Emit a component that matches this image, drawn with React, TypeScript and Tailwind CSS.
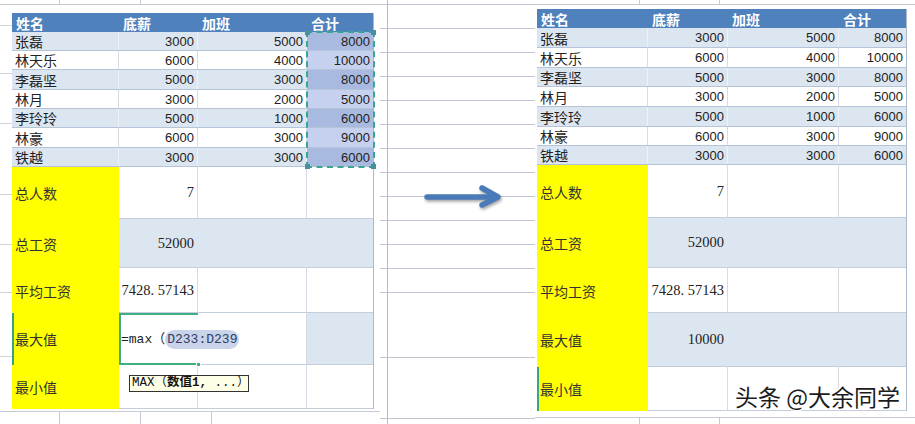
const people = [
  ['张磊', '3000', '5000', '8000'],
  ['林天乐', '6000', '4000', '10000'],
  ['李磊坚', '5000', '3000', '8000'],
  ['林月', '3000', '2000', '5000'],
  ['李玲玲', '5000', '1000', '6000'],
  ['林豪', '6000', '3000', '9000'],
  ['铁越', '3000', '3000', '6000'],
];

const cjk = "font-['Noto_Sans_CJK_SC',sans-serif]";
const sans = "font-['Liberation_Sans',sans-serif]";
const serif = "font-['Liberation_Serif','Noto_Sans_CJK_SC',serif]";
const mono = "font-['Liberation_Mono','Noto_Sans_CJK_SC',monospace]";

const LEFT = 'grid-cols-[107px_79px_109px_66px]';
const RIGHT = 'grid-cols-[111px_80px_111px_67px]';

function HeaderRow({ cols }: { cols: string }) {
  return (
    <div className={`grid ${cols} h-[19px] bg-[#4f81bd] text-white font-bold text-[14px] leading-none ${cjk}`}>
      {['姓名', '底薪', '加班', '合计'].map((t) => (
        <div key={t} className="flex items-center pl-[4px]">
          {t}
        </div>
      ))}
    </div>
  );
}

function DataRows({ cols, heights, selected }: { cols: string; heights: string[]; selected?: boolean }) {
  return (
    <>
      {people.map((p, i) => {
        const blue = i % 2 === 0;
        const line = blue ? 'border-r-[#eef2f8]' : 'border-r-[#d5dae3]';
        const sel = blue ? 'bg-[#a9bae1]' : 'bg-[#c6d0ef]';
        return (
          <div
            key={p[0]}
            className={`grid ${cols} ${heights[i]} ${blue ? 'bg-[#dce6f1]' : 'bg-white'} border-b border-b-[#b6c4da] text-[#222] leading-none`}
          >
            <div className={`flex items-center pl-[3px] border-r ${line} text-[14px] ${cjk}`}>{p[0]}</div>
            <div className={`flex items-center justify-end pr-[3px] border-r ${line} text-[13px] ${sans}`}>{p[1]}</div>
            <div className={`flex items-center justify-end pr-[3px] border-r ${line} text-[13px] ${sans}`}>{p[2]}</div>
            <div className={`flex items-center justify-end pr-[3px] text-[13px] ${sans} ${selected ? sel : ''}`}>{p[3]}</div>
          </div>
        );
      })}
    </>
  );
}

function Label({ text, active }: { text: string; active?: boolean }) {
  return (
    <div
      className={`flex items-center bg-[#ffff00] text-[14px] text-[#333] leading-none ${cjk} ${
        active ? 'border-l-2 border-l-[#35a57c] pl-[1px]' : 'pl-[3px]'
      }`}
    >
      {text}
    </div>
  );
}

function BottomRow({
  cols,
  h,
  label,
  value,
  blue,
  active,
}: {
  cols: string;
  h: string;
  label: string;
  value?: string;
  blue?: boolean;
  active?: boolean;
}) {
  const bg = blue ? 'bg-[#dce6f1]' : 'bg-white';
  const v = blue ? 'border-r-transparent' : 'border-r-[#d5dae3]';
  return (
    <div className={`grid ${cols} ${h}`}>
      <Label text={label} active={active} />
      <div
        className={`flex items-center justify-end pr-[3px] ${bg} border-b border-b-[#c3cddd] border-r ${v} text-[14.5px] text-[#222] leading-none whitespace-pre ${serif}`}
      >
        {value}
      </div>
      <div className={`${bg} border-b border-b-[#c3cddd] border-r ${v}`} />
      <div className={`${bg} border-b border-b-[#c3cddd]`} />
    </div>
  );
}

function TopStrip({ ticks }: { ticks: string[] }) {
  return (
    <div className="h-[5px] border-b border-[#c9c9d3] flex shrink-0">
      {ticks.map((t, i) => (
        <div key={i} className={`${t} h-full border-r border-[#c9c9d3]`} />
      ))}
    </div>
  );
}

function Arrow() {
  return (
    <svg width="80" height="26" viewBox="0 0 80 26" className="drop-shadow-[1px_2px_1.5px_rgba(0,0,0,0.35)]">
      <g fill="none" stroke="#4a7bb8" strokeWidth="5.5" strokeLinecap="round" strokeLinejoin="round">
        <path d="M3 13 L72 13" />
        <path d="M58 4 L74 13 L58 21" />
      </g>
    </svg>
  );
}

export default function App() {
  return (
    <div className="w-[915px] h-[424px] bg-white flex overflow-hidden">
      {/* before */}
      <div className="w-[380px] h-full flex flex-col relative">
        <TopStrip ticks={['w-[60px]', 'w-[81px]']} />
        <div className="flex h-[404px]">
          <div className="w-[12px] flex flex-col">
            <div className="h-[21px] border-b border-[#d3d3db]" />
            <div className="h-[48px] border-b border-[#d3d3db]" />
            <div className="h-[50px] border-b border-[#d3d3db]" />
            <div className="h-[71px] border-b border-[#d3d3db]" />
            <div className="h-[50px] border-b border-[#d3d3db]" />
            <div className="h-[48px] border-b border-[#d3d3db]" />
            <div className="h-[64px] border-b border-[#d3d3db]" />
          </div>
          <div className="pt-[8px]">
            <div className="border-r border-[#aeb9cc]">
              <HeaderRow cols={LEFT} />
              <DataRows
                cols={LEFT}
                heights={['h-[19px]', 'h-[19px]', 'h-[20px]', 'h-[19px]', 'h-[19px]', 'h-[20px]', 'h-[19px]']}
                selected
              />
              <BottomRow cols={LEFT} h="h-[52px]" label="总人数" value="7" />
              <BottomRow cols={LEFT} h="h-[49px]" label="总工资" value="52000" blue />
              <BottomRow cols={LEFT} h="h-[45px]" label="平均工资" value="7428. 57143" />
              <div className={`grid ${LEFT} h-[52px]`}>
                <Label text="最大值" active />
                <div className="relative z-10 bg-white border-2 border-r-0 border-[#3fae83] flex items-center">
                  <div className={`whitespace-pre flex items-center text-[13px] text-[#222] leading-none ${mono}`}>
                    =max（
                    <span className="bg-[#c9d3ea] rounded-full px-[2px] py-[3px] text-[#2f3f66]">D233:D239</span>
                  </div>
                  <div className="absolute -right-[3px] -bottom-[4px] w-[5px] h-[5px] bg-[#3fae83] border border-white" />
                </div>
                <div className="bg-white border-b border-b-[#c3cddd] border-r border-r-[#d5dae3]" />
                <div className="bg-[#dce6f1] border-b border-b-[#c3cddd]" />
              </div>
              <BottomRow cols={LEFT} h="h-[44px]" label="最小值" />
            </div>
          </div>
        </div>
        <div className="mt-[2px] border-t border-[#c9c9d3] flex flex-1">
          <div className="w-[60px] border-r border-[#c9c9d3]" />
          <div className="w-[81px] border-r border-[#c9c9d3]" />
          <div className="w-[71px] border-r border-[#c9c9d3]" />
        </div>

        {/* copy selection on 合计 */}
        <div className="absolute left-[306px] top-[31px] w-[69px] h-[137px] border-2 border-dashed border-[#37a88f]">
          <div className="absolute -left-[3px] -top-[3px] w-[5px] h-[5px] bg-[#4a8fa0]" />
          <div className="absolute -right-[3px] -top-[3px] w-[5px] h-[5px] bg-[#4a8fa0]" />
          <div className="absolute -left-[3px] -bottom-[3px] w-[5px] h-[5px] bg-[#4a8fa0]" />
          <div className="absolute -right-[3px] -bottom-[3px] w-[5px] h-[5px] bg-[#4a8fa0]" />
        </div>

        {/* function hint */}
        <div
          className={`absolute left-[129px] top-[375px] w-[120px] h-[17px] pl-[2px] flex items-center border border-[#333] bg-[#ffffe6] text-[12.5px] text-[#111] leading-none whitespace-pre ${mono}`}
        >
          MAX（<b>数值1,</b> ...）
        </div>
      </div>

      {/* arrow gap */}
      <div className="w-[155px] h-full relative bg-[linear-gradient(to_right,transparent_7px,#b9b9c6_7px,#b9b9c6_8px,transparent_8px)]">
        <div className="h-[5px] border-b border-[#c4c4d0]" />
        {Array.from({ length: 12 }).map((_, i) => (
          <div key={i} className="h-[24px] border-b border-[#c4c4d0]" />
        ))}
        <div className="h-[65px] border-b border-[#c4c4d0]" />
        <div className="h-[61px] border-b border-[#c4c4d0]" />
        <div className="absolute left-[44px] top-[184px]">
          <Arrow />
        </div>
      </div>

      {/* after */}
      <div className="w-[380px] h-full flex flex-col relative">
        <TopStrip ticks={['w-[105px]', 'w-[80px]']} />
        <div className="pt-[4px] pl-[2px]">
          <div className="w-[370px] border-r border-[#aeb9cc]">
            <HeaderRow cols={RIGHT} />
            <DataRows
              cols={RIGHT}
              heights={['h-[20px]', 'h-[20px]', 'h-[19px]', 'h-[20px]', 'h-[20px]', 'h-[19px]', 'h-[19px]']}
            />
            <BottomRow cols={RIGHT} h="h-[53px]" label="总人数" value="7" />
            <BottomRow cols={RIGHT} h="h-[50px]" label="总工资" value="52000" blue />
            <BottomRow cols={RIGHT} h="h-[45px]" label="平均工资" value="7428. 57143" />
            <BottomRow cols={RIGHT} h="h-[54px]" label="最大值" value="10000" blue />
            <BottomRow cols={RIGHT} h="h-[44px]" label="最小值" active />
          </div>
        </div>
        <div className="mt-[6px] border-t border-[#c9c9d3] flex flex-1">
          <div className="w-[105px] border-r border-[#c9c9d3]" />
          <div className="w-[80px] border-r border-[#c9c9d3]" />
        </div>

        <div
          className={`absolute left-[200px] top-[385px] text-[23px] leading-none text-[#1c1c1c] whitespace-nowrap [text-shadow:1px_1px_0_#fff,-1px_-1px_0_#fff,1px_-1px_0_#fff,-1px_1px_0_#fff] ${cjk}`}
        >
          头条 @大余同学
        </div>
      </div>
    </div>
  );
}
